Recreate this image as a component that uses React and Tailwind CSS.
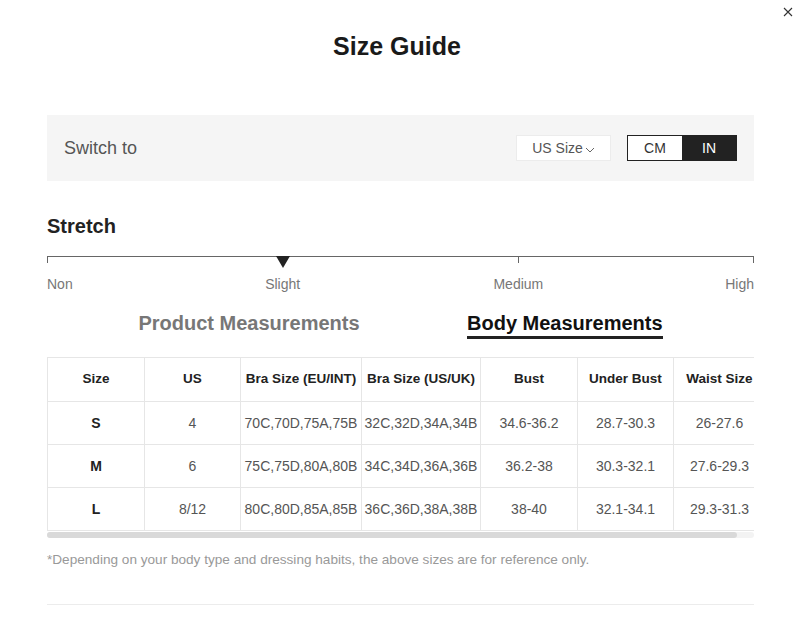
const headers = ['Size', 'US', 'Bra Size (EU/INT)', 'Bra Size (US/UK)', 'Bust', 'Under Bust', 'Waist Size'];
const widths = ['w-[97px]', 'w-[96px]', 'w-[121px]', 'w-[119px]', 'w-[97px]', 'w-[96px]', 'w-[92px]'];

const rows = [
  ['S', '4', '70C,70D,75A,75B', '32C,32D,34A,34B', '34.6-36.2', '28.7-30.3', '26-27.6'],
  ['M', '6', '75C,75D,80A,80B', '34C,34D,36A,36B', '36.2-38', '30.3-32.1', '27.6-29.3'],
  ['L', '8/12', '80C,80D,85A,85B', '36C,36D,38A,38B', '38-40', '32.1-34.1', '29.3-31.3'],
];

const CloseIcon = () => (
  <svg width="10" height="10" viewBox="0 0 10 10" className="text-[#333]">
    <path d="M1 1 L9 9 M9 1 L1 9" stroke="currentColor" strokeWidth="1.1" fill="none" />
  </svg>
);

const Chevron = () => (
  <svg width="10" height="6" viewBox="0 0 10 6" className="ml-[2px] mt-[3px] text-[#666]">
    <path d="M1 1 L5 5 L9 1" stroke="currentColor" strokeWidth="1" fill="none" />
  </svg>
);

const Stretch = () => (
  <div className="mt-[35px]">
    <h3 className="text-[20px] font-bold text-[#222] leading-none">Stretch</h3>
    <div className="relative mt-[20px] h-[40px]">
      <div className="h-px bg-[#666]" />
      <div className="absolute left-0 top-0 w-px h-[7px] bg-[#666]" />
      <div className="absolute left-2/3 top-0 w-px h-[7px] bg-[#666]" />
      <div className="absolute right-0 top-0 w-px h-[7px] bg-[#666]" />
      <div className="absolute left-1/3 top-0 -translate-x-1/2 w-0 h-0 border-l-[7px] border-r-[7px] border-t-[12px] border-l-transparent border-r-transparent border-t-[#222]" />
      <span className="absolute left-0 top-[21px] text-[14px] text-[#777] leading-none">Non</span>
      <span className="absolute left-1/3 top-[21px] -translate-x-1/2 text-[14px] text-[#777] leading-none">Slight</span>
      <span className="absolute left-2/3 top-[21px] -translate-x-1/2 text-[14px] text-[#777] leading-none">Medium</span>
      <span className="absolute right-0 top-[21px] text-[14px] text-[#777] leading-none">High</span>
    </div>
  </div>
);

const App = () => {
  return (
    <div className="w-[794px] h-[628px] bg-white overflow-hidden font-['Liberation_Sans',Arial,sans-serif]">
      <div className="flex justify-end pt-[7px] pr-[1px]">
        <CloseIcon />
      </div>
      <h2 className="mt-[17px] text-center text-[25px] font-bold text-[#1a1a1a] leading-none">Size Guide</h2>

      <div className="ml-[47px] w-[707px]">
        <div className="mt-[56px] h-[66px] bg-[#f5f5f5] flex items-center justify-between pl-[17px] pr-[17px]">
          <span className="text-[18px] text-[#555]">Switch to</span>
          <div className="flex items-center">
            <div className="w-[95px] h-[26px] bg-white border border-[#ececec] flex items-center justify-center text-[14px] text-[#555]">
              US Size
              <Chevron />
            </div>
            <div className="ml-[16px] flex h-[26px] border border-[#222]">
              <div className="w-[54px] bg-white flex items-center justify-center text-[14px] text-[#333]">CM</div>
              <div className="w-[54px] bg-[#222] flex items-center justify-center text-[14px] text-white">IN</div>
            </div>
          </div>
        </div>

        <Stretch />

        <div className="flex mt-[16px]">
          <div className="w-[402px] flex justify-center pl-[2px]">
            <span className="text-[20px] font-bold text-[#777] leading-none pb-[4px] pt-[1px]">Product Measurements</span>
          </div>
          <div className="flex-1 flex justify-start pl-[18px]">
            <span className="text-[20px] font-bold text-[#111] leading-none pb-[3px] pt-[1px] border-b-[3px] border-[#222]">Body Measurements</span>
          </div>
        </div>

        <div className="mt-[18px] overflow-hidden">
          <table className="w-[718px] table-fixed border-collapse border border-[#e6e6e6]">
            <thead>
              <tr className="h-[44px]">
                {headers.map((h, i) => (
                  <th key={h} className={`${widths[i]} border border-[#e6e6e6] text-[13.5px] font-bold text-[#222] text-center whitespace-nowrap p-0`}>
                    {h}
                  </th>
                ))}
              </tr>
            </thead>
            <tbody>
              {rows.map((row) => (
                <tr key={row[0]} className="h-[43px]">
                  {row.map((cell, i) => (
                    <td
                      key={i}
                      className={
                        i === 0
                          ? 'border border-[#e6e6e6] text-[14px] font-bold text-[#222] text-center p-0'
                          : 'border border-[#e6e6e6] text-[14px] text-[#555] text-center whitespace-nowrap p-0'
                      }
                    >
                      {cell}
                    </td>
                  ))}
                </tr>
              ))}
            </tbody>
          </table>
        </div>
        <div className="mt-px h-[6px] bg-[#f3f3f3] rounded-full">
          <div className="w-[690px] h-[6px] bg-[#d9d9d9] rounded-full" />
        </div>

        <p className="mt-[15px] text-[13.6px] text-[#999] leading-none">
          *Depending on your body type and dressing habits, the above sizes are for reference only.
        </p>

        <div className="mt-[37px] h-px bg-[#ececec]" />
      </div>
    </div>
  );
};

export default App;
